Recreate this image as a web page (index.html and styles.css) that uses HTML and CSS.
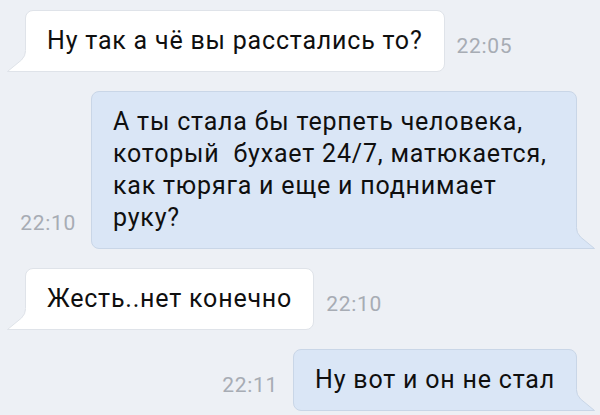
FILE: index.html
```html
<!DOCTYPE html>
<html lang="ru">
<head>
<meta charset="utf-8">
<link rel="stylesheet" href="styles.css">
</head>
<body>
<div class="chat">
  <div class="row in first">
    <div class="bubble">
      <svg class="tail" viewBox="0 0 19 21" width="19" height="21"><path class="fill" d="M19,-1 L18.5,0 Q18.5,5 14.5,9 L0.5,20.5 L19,20.5 Z"/><path class="edge" d="M18.5,0 Q18.5,5 14.5,9 L0.5,20.5 L19,20.5"/></svg>
      <span class="text">Ну так а чё вы расстались то?</span>
    </div>
    <span class="time">22:05</span>
  </div>
  <div class="row out">
    <span class="time">22:10</span>
    <div class="bubble wide">
      <svg class="tail" viewBox="0 0 19 21" width="19" height="21"><path class="fill" d="M0,-1 L0.5,0 Q0.5,5 4.5,9 L18.5,20.5 L0,20.5 Z"/><path class="edge" d="M0.5,0 Q0.5,5 4.5,9 L18.5,20.5 L0,20.5"/></svg>
      <span class="text">А ты стала бы терпеть человека, который&nbsp; бухает 24/7, матюкается, как тюряга и еще и поднимает руку?</span>
    </div>
  </div>
  <div class="row in">
    <div class="bubble">
      <svg class="tail" viewBox="0 0 19 21" width="19" height="21"><path class="fill" d="M19,-1 L18.5,0 Q18.5,5 14.5,9 L0.5,20.5 L19,20.5 Z"/><path class="edge" d="M18.5,0 Q18.5,5 14.5,9 L0.5,20.5 L19,20.5"/></svg>
      <span class="text">Жесть..нет конечно</span>
    </div>
    <span class="time">22:10</span>
  </div>
  <div class="row out">
    <span class="time">22:11</span>
    <div class="bubble">
      <svg class="tail" viewBox="0 0 19 21" width="19" height="21"><path class="fill" d="M0,-1 L0.5,0 Q0.5,5 4.5,9 L18.5,20.5 L0,20.5 Z"/><path class="edge" d="M0.5,0 Q0.5,5 4.5,9 L18.5,20.5 L0,20.5"/></svg>
      <span class="text">Ну вот и он не стал</span>
    </div>
  </div>
</div>
</body>
</html>
```

FILE: styles.css
```css
html, body {
  margin: 0;
  padding: 0;
  background: #edf0f5;
  width: 600px;
  height: 415px;
  overflow: hidden;
}

.chat {
  display: flex;
  flex-direction: column;
  gap: 19px;
  padding-top: 10px;
  font-family: Roboto, "Noto Sans", sans-serif;
}

.row {
  display: flex;
  align-items: flex-end;
}

.row.in {
  justify-content: flex-start;
  padding-left: 25px;
  gap: 12px;
}

.row.out {
  justify-content: flex-end;
  padding-right: 23px;
  gap: 15px;
}

.bubble {
  position: relative;
  box-sizing: border-box;
  padding: 14px 21px 14px 21px;
  border-radius: 8px;
  font-size: 25px;
  letter-spacing: 0.8px;
  line-height: 32px;
  color: #0f0f0f;
}

.row.in .bubble {
  background: #ffffff;
  border: 1px solid #dfe3e9;
  border-bottom-left-radius: 0;
}

.row.out .bubble {
  background: #dae6f6;
  border: 1px solid #c9d6e7;
  border-bottom-right-radius: 0;
}

.bubble.wide {
  width: 486px;
}

.tail {
  position: absolute;
  bottom: -1px;
  overflow: visible;
}

.row.in .tail {
  left: -19px;
}

.row.out .tail {
  right: -19px;
}

.row.in .tail .fill { fill: #ffffff; }
.row.in .tail .edge { fill: none; stroke: #dfe3e9; stroke-width: 1; }
.row.out .tail .fill { fill: #dae6f6; }
.row.out .tail .edge { fill: none; stroke: #c9d6e7; stroke-width: 1; }

.time {
  font-size: 21px;
  letter-spacing: 0.7px;
  line-height: 24px;
  color: #a7acb4;
  margin-bottom: 14px;
}
```
